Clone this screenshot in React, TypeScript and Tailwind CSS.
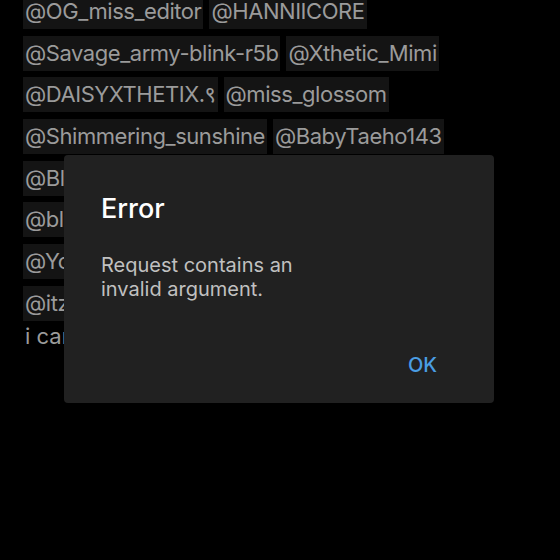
const rows: string[][] = [
  ["@OG_miss_editor", "@HANNIICORE"],
  ["@Savage_army-blink-r5b", "@Xthetic_Mimi"],
  ["@DAISYXTHETIX.९", "@miss_glossom"],
  ["@Shimmering_sunshine", "@BabyTaeho143"],
  ["@Blinkzone_", "@lalisa"],
  ["@blackpink_4ever", "@rose"],
  ["@Yoonie_", "@jk"],
  ["@itzyxmidzy", "@ryu"],
]

function Chip({ name }: { name: string }) {
  return (
    <span className="h-[35px] flex items-center px-[2px] bg-[#141414] text-[#9b9b9b] text-[22px] tracking-[-0.45px] whitespace-nowrap">
      {name}
    </span>
  )
}

function App() {
  return (
    <div
      className="relative w-[560px] h-[560px] overflow-hidden bg-black"
      style={{ fontFamily: "Inter, 'Noto Sans', sans-serif" }}
    >
      {/* mention list */}
      <div className="mt-[-6px] pl-[23px] flex flex-col gap-y-[6.7px]">
        {rows.map((r, i) => (
          <div key={i} className="flex gap-[6px]">
            {r.map(n => (
              <Chip key={n} name={n} />
            ))}
          </div>
        ))}
        <p className="text-[#9b9b9b] text-[22px] leading-[28px] pl-[2px] mt-[-6px]">
          i can't find my name
        </p>
      </div>

      {/* error dialog */}
      <div className="absolute left-[64px] top-[155px] w-[430px] h-[248px] bg-[#212121] rounded-[4px] flex flex-col">
        <h2 className="pl-[37px] pt-[37px] text-white text-[27px] font-medium leading-[34px]">
          Error
        </h2>
        <p className="pl-[37px] pt-[27px] text-[#c0c0c0] text-[20px] leading-[24px] w-[270px]">
          Request contains an invalid argument.
        </p>
        <div className="mt-auto flex justify-end pr-[57px] pb-[23px]">
          <button className="text-[#4a9de3] text-[20px] font-medium">OK</button>
        </div>
      </div>
    </div>
  )
}

export default App
